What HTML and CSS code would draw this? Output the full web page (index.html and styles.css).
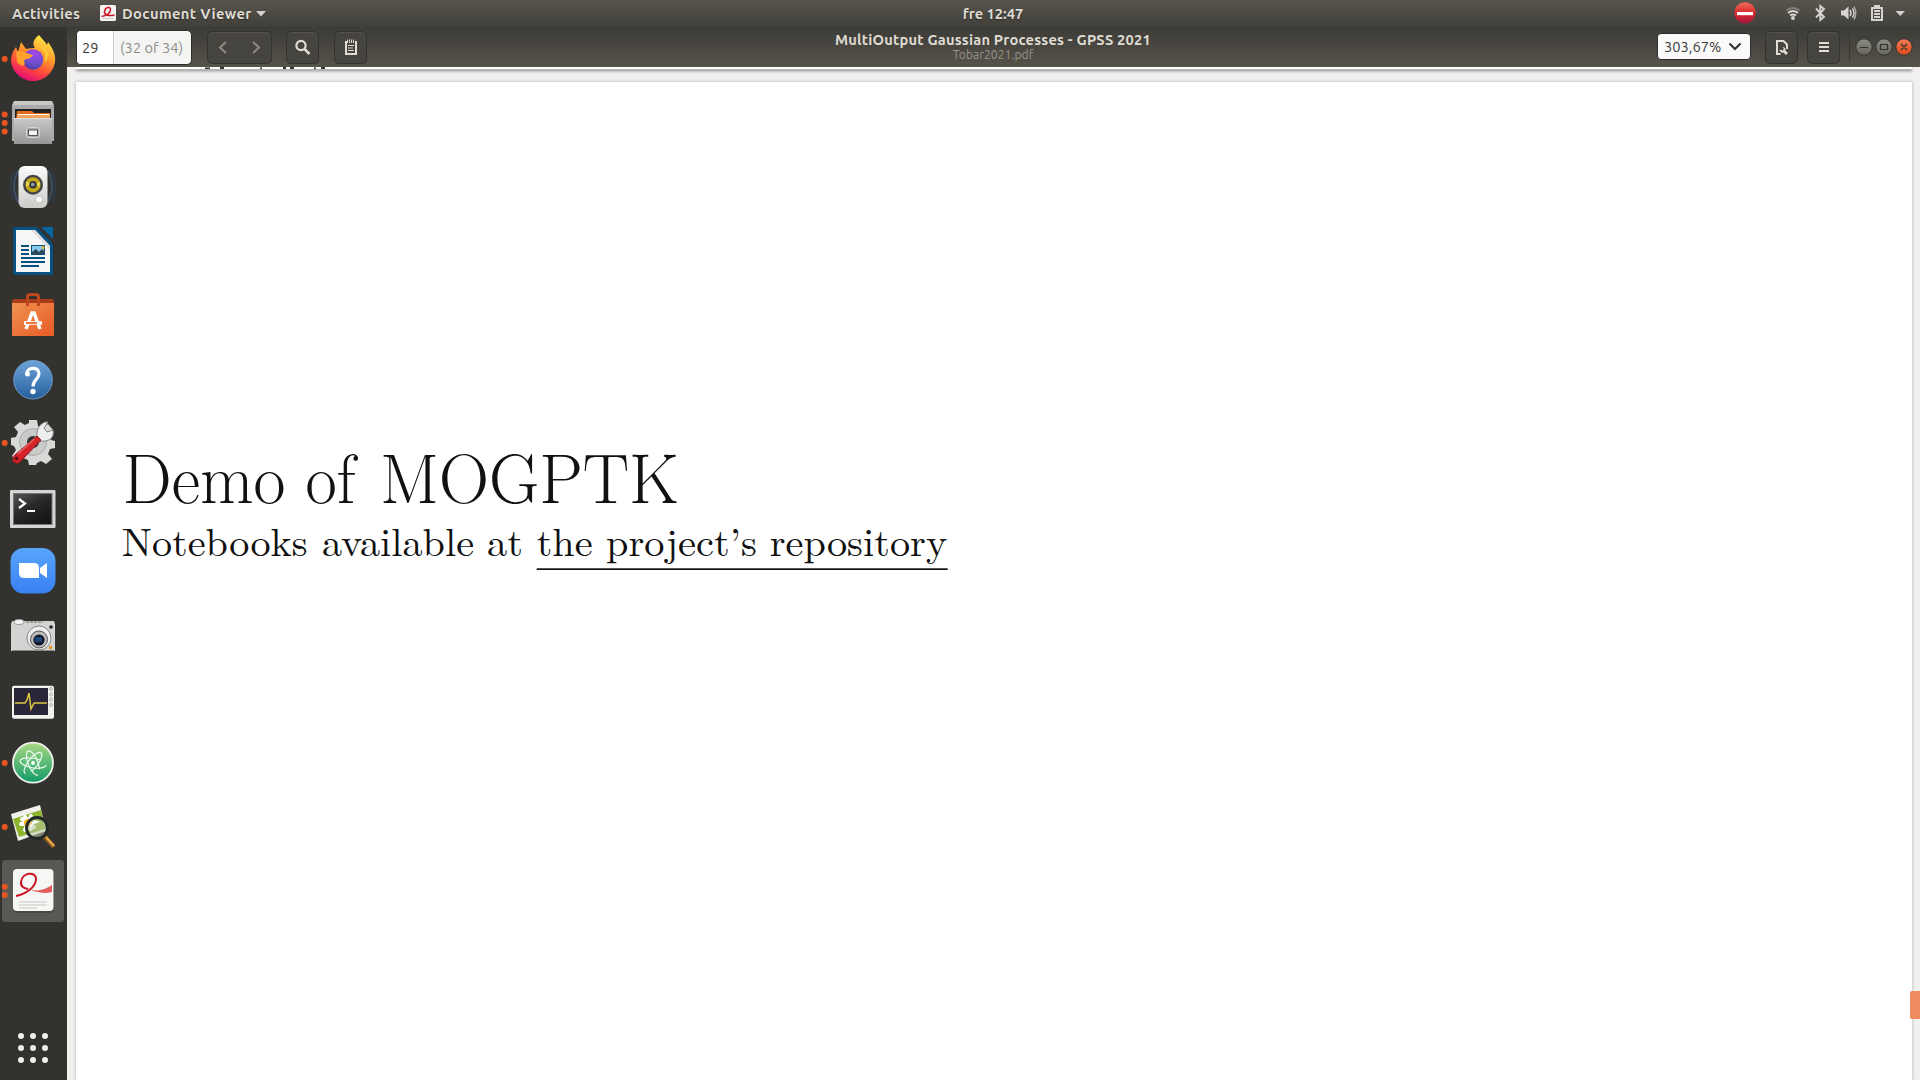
FILE: index.html
```html
<!DOCTYPE html>
<html lang="en">
<head>
<meta charset="utf-8">
<title>MultiOutput Gaussian Processes - GPSS 2021</title>
<link rel="stylesheet" href="styles.css">
</head>
<body>
<header class="panel">
  <div class="panel-left">
    <span class="activities">Activities</span>
    <svg class="app-icon" width="16" height="16" viewBox="0 0 16 16"><rect width="16" height="16" rx="1.5" fill="#f4f3f3"/><path d="M1.500 11.500C7 11 11 7 10.500 4 10 1.500 5.500 2 4.500 6 4 10 8 11.500 14.500 10" fill="none" stroke="#cc1625" stroke-width="1.500"/><path d="M2.500 13.500h11" stroke="#ccc"/></svg>
    <span class="app-name">Document Viewer</span>
    <svg class="caret" width="10" height="6"><path d="M0 0h10L5 5.500z" fill="#d5d3cf"/></svg>
  </div>
  <span class="clock">fre 12:47</span>
  <div class="panel-right">
    <svg width="190" height="27" viewBox="1730 0 190 27">
      <defs><linearGradient id="stop" x2="0" y2="1"><stop stop-color="#ef6b58"/><stop offset=".5" stop-color="#d92b2b"/><stop offset="1" stop-color="#a91540"/></linearGradient></defs>
      <circle cx="1745" cy="12.800" r="10.600" fill="url(#stop)"/><rect x="1737" y="12" width="16" height="3.200" fill="#fff"/>
      <g fill="none" stroke="#d5d3cf" stroke-width="1.800">
        <path d="M1786.500 10.500q6.500-5 13 0" stroke="#85827b"/><path d="M1788 13q5-4 10 0"/><path d="M1790 15.500q3-2 6 0"/>
        <path d="M1816 8.500l8 8.500-3.700 3V6l3.700 3-8 8.500" stroke-width="1.900"/>
        <path d="M1850 10q2 3 0 6M1852.500 8.500q3 4.500 0 9" stroke-width="1.500"/><path d="M1854 6.500q3.500 6.500 0 13" stroke="#aaa8a3" stroke-width="1.500"/>
        <path d="M1872 8h10v12h-10z" stroke-width="2"/><path d="M1874 11h6M1874 14h6M1874 17h6" stroke-width="1.800"/>
      </g>
      <g fill="#d5d3cf"><circle cx="1793" cy="18" r="2"/><path d="M1841 10.500h3l4.500-4v13l-4.500-4h-3z"/><path d="M1874 5h6v3h-6zM1895.500 11h9.500l-4.700 5z"/></g>
    </svg>
  </div>
</header>
<div class="workspace">
  <nav class="dock">
    <svg width="67" height="64" viewBox="0 0 67 64">
      <defs>
        <linearGradient id="fox" x1=".75" y1="0" x2=".3" y2="1"><stop stop-color="#fff14a"/><stop offset=".4" stop-color="#ff9a2a"/><stop offset=".72" stop-color="#ff453f"/><stop offset="1" stop-color="#df067d"/></linearGradient>
        <radialGradient id="globe" cx=".6" cy=".2" r=".9"><stop stop-color="#a447ec"/><stop offset=".6" stop-color="#6b4fcb"/><stop offset="1" stop-color="#42369c"/></radialGradient>
      </defs>
      <circle class="dot" cx="4.700" cy="32" r="3"/>
      <path d="M39 8c2 3 6 6 8 10l1-3c5 7 8 13 7 20-2 12-12 19-22 19S12 46 11 34c0-6 2-10 5-14l2 5 3-10 5 7c4-1 7-1 9-1-4-5 0-10 4-13z" fill="url(#fox)"/>
      <circle cx="33" cy="32.500" r="10.200" fill="url(#globe)"/>
      <path d="M16 25c6-3 9 1 17 3-2 4-7 4-9 5 2 6-1 8-7 2z" fill="#ffa22e"/><path d="M33 21c10-3 15 5 11 15 8-7 4-20-11-15z" fill="#ffcc38"/>
    </svg>
    <svg width="67" height="64" viewBox="0 0 67 64">
      <defs><linearGradient id="metal" x2="0" y2="1"><stop stop-color="#c9c9c9"/><stop offset="1" stop-color="#979797"/></linearGradient></defs>
      <circle class="dot" cx="4.700" cy="23.500" r="3"/><circle class="dot" cx="4.700" cy="32" r="3"/><circle class="dot" cx="4.700" cy="40.500" r="3"/>
      <path d="M14 10h38l2 4v36H12V14z" fill="#aaa"/><path d="M14 10h38l1 4H13z" fill="#c7c7c7"/><rect x="15" y="18" width="36" height="10" fill="#222"/><path d="M17 20h15l2 2h16v6H16z" fill="#df6a1c"/><path d="M17 23h33v5H17z" fill="#f4a35b"/><path d="M18 23.500h31" stroke="#fff"/>
      <path d="M14 27h38v26H14z" fill="url(#metal)"/><path d="M14 27.500h38" stroke="#ddd"/><rect x="26.500" y="36.500" width="13" height="10" rx="2" fill="#aaa" stroke="#d5d5d5"/><rect x="28.500" y="39" width="9" height="5.500" fill="#f4f4f4" stroke="#555"/>
    </svg>
    <svg width="67" height="64" viewBox="0 0 67 64">
      <defs><linearGradient id="box" x2="0" y2="1"><stop stop-color="#fbfbfb"/><stop offset="1" stop-color="#ccccc9"/></linearGradient></defs>
      <g fill="none" stroke="#2f3b49" stroke-width="2"><path d="M14 16q-7 15 0 31M52 16q7 15 0 31"/><path d="M18 16q-8 15 0 31M48 16q8 15 0 31" stroke="#3a4e66"/></g>
      <rect x="18.500" y="11" width="29" height="42" rx="6" fill="url(#box)"/><circle cx="33" cy="29.700" r="10" fill="#454545"/><circle cx="33" cy="29.700" r="7.500" fill="#c6a916"/><path d="M33 29.700l-7 1.500v-5zm0 0l7 2v-5z" fill="#e9d34e"/><circle cx="33" cy="29.700" r="3.800" fill="#34383d"/><circle cx="32.700" cy="29.500" r="1.800" fill="#97a0a8"/><circle cx="39" cy="44.500" r="3.700" fill="#f8f8f8" stroke="#bbb"/><circle cx="26" cy="46" r="2" fill="none" stroke="#ccc"/>
    </svg>
    <svg width="67" height="64" viewBox="0 0 67 64">
      <path d="M15 8h22l16 17v31H15q-2 0-2-2V10q0-2 2-2z" fill="#07507f"/><path d="M41 8h12v12z" fill="#07659e"/><path d="M16 11h19l15 16v26H16z" fill="#f6f6f6"/><path d="M35 11l15 16v4L31 11z" fill="#ddd"/><path d="M21 27h8M21 31h8M21 35h8M21 39h24M21 43h24M21 47h18" stroke="#07507f" stroke-width="2"/><rect x="31.500" y="26.500" width="13" height="9" fill="#86c8ec" stroke="#07507f"/><path d="M32 35v-2l4-3 3 3 3-3 3 3v2z" fill="#2f4858"/><circle cx="43" cy="28.500" r="1.500" fill="#eeb32c"/>
    </svg>
    <svg width="67" height="64" viewBox="0 0 67 64">
      <defs><linearGradient id="bag" x2="1" y2="1"><stop stop-color="#ef9250"/><stop offset="1" stop-color="#e85a27"/></linearGradient></defs>
      <path d="M13 16h40l1 4H12z" fill="#a93d18"/><path d="M12 20h42v33H12z" fill="url(#bag)"/><path d="M27.500 23v-9q0-2.500 3-2.500h5q3 0 3 2.500v9" fill="none" stroke="#bd461c" stroke-width="3"/><path d="M26 46l6-16h2l6 16M24 40h18" fill="none" stroke="#fff" stroke-width="3.500"/><path d="M26 40h11" stroke="#e66b31" stroke-width="1.800"/>
    </svg>
    <svg width="67" height="64" viewBox="0 0 67 64">
      <defs><linearGradient id="help" x2="0" y2="1"><stop stop-color="#6ca5d8"/><stop offset="1" stop-color="#275f9d"/></linearGradient></defs>
      <circle cx="33" cy="32.700" r="19.300" fill="url(#help)" stroke="#699ac6"/><path d="M27 27c-1-7 12-8 12-.5 0 6-6 6-6 13" fill="none" stroke="#fff" stroke-width="3.200"/><circle cx="27.500" cy="27" r="2.500" fill="#fff"/><circle cx="33" cy="44.500" r="2.700" fill="#fff"/>
    </svg>
    <svg width="67" height="64" viewBox="0 0 67 64">
      <circle class="dot" cx="4.700" cy="32" r="3"/>
      <path d="M29 9h8l1 6 4 2 6-4 5 6-4 5 2 5 4 1v7l-5 1-2 5 4 5-6 5-5-3-4 2-1 2h-7l-1-5-5-2-6 3-5-5 4-6-2-4-3-1v-7l5-1 2-5-4-5 6-5 5 3 4-2z" fill="#d9d9d8"/><circle cx="33" cy="31" r="13.500" fill="#cacac9" stroke="#aaa"/><circle cx="33" cy="31" r="6" fill="#343432"/>
      <path d="M37 25c-1-8 5-15 11-14l-4 6 3 4 6-2c2 8-5 12-11 11l-3 1-5-4z" fill="#eee" stroke="#858585"/><path d="M37 25l4 4-21 22q-4 3-7-1-1-3 2-6z" fill="#d42329" stroke="#8f171b"/><path d="M18 43l16-15" stroke="#ef6262" stroke-width="1.500"/><circle cx="16.500" cy="47.500" r="1.800" fill="#590d11"/>
    </svg>
    <svg width="67" height="64" viewBox="0 0 67 64">
      <defs><linearGradient id="term" x2=".7" y2="1"><stop stop-color="#555"/><stop offset=".5" stop-color="#282828"/><stop offset="1" stop-color="#161616"/></linearGradient></defs>
      <rect x="10" y="15" width="45.500" height="38" rx="1" fill="#d5d5d4"/><rect x="13.500" y="18.500" width="38.500" height="31" fill="url(#term)" stroke="#777"/><path d="M19 24l6 4.500-6 4.500M27 36h8" fill="none" stroke="#fff" stroke-width="2.200"/>
    </svg>
    <svg width="67" height="64" viewBox="0 0 67 64">
      <defs><linearGradient id="zoom" x2="0" y2="1"><stop stop-color="#58a5fb"/><stop offset="1" stop-color="#3980f1"/></linearGradient></defs>
      <rect x="10.500" y="9" width="45" height="45.500" rx="13" fill="url(#zoom)"/><path d="M19 24h15q5 0 5 5v10H24q-5 0-5-5zM40 29l7-5v15l-7-5z" fill="#fff"/>
    </svg>
    <svg width="67" height="64" viewBox="0 0 67 64">
      <path d="M12 18h42l1 3v27H11V21z" fill="#d3d3d1"/><path d="M12 47.500h42" stroke="#888"/><ellipse cx="19" cy="19" rx="5" ry="2.500" fill="#f5f5f5" stroke="#999"/><path d="M26 19h17" stroke="#666" stroke-dasharray="3 1"/><circle cx="39" cy="35" r="12" fill="#eee" stroke="#888"/><circle cx="39" cy="36.500" r="8.500" fill="#bbb" stroke="#555"/><circle cx="39" cy="37" r="5.600" fill="#101725"/><rect x="35" y="34" width="7" height="5" fill="#1a4579"/><circle cx="51" cy="24" r="1.800" fill="#222"/><rect x="49" y="43" width="3" height="3" fill="#e99520"/>
    </svg>
    <svg width="67" height="64" viewBox="0 0 67 64">
      <rect x="12" y="18.700" width="42" height="33" rx="2" fill="#f1f1ed"/><rect x="14" y="21" width="34" height="27" fill="#2a2637"/><path d="M15 36h10l2-3 2-7 2 16 3-6h13" fill="none" stroke="#dac645" stroke-width="1.500"/><g fill="#e8e8e6" stroke="#999" stroke-width=".7"><circle cx="51" cy="22" r="1.500"/><circle cx="51" cy="27.500" r="1.500"/><circle cx="51" cy="32.500" r="1.500"/><circle cx="51" cy="38" r="1.500"/></g>
    </svg>
    <svg width="67" height="64" viewBox="0 0 67 64">
      <defs><linearGradient id="atom" x2="0" y2="1"><stop stop-color="#a9d984"/><stop offset="1" stop-color="#119b68"/></linearGradient></defs>
      <circle class="dot" cx="4.700" cy="32" r="3"/><circle cx="33" cy="31.700" r="20" fill="url(#atom)" stroke="#f1f1ee" stroke-width="1.800"/><g fill="none" stroke="#effaf2" stroke-width="1.200"><ellipse cx="33" cy="32" rx="13" ry="4.800" transform="rotate(10 33 32)" stroke-dasharray="50 8"/><ellipse cx="33" cy="32" rx="13" ry="4.800" transform="rotate(68 33 32)" stroke-dasharray="52 6"/><ellipse cx="33" cy="32" rx="13" ry="4.800" transform="rotate(128 33 32)" stroke-dasharray="51 7"/></g><circle cx="33" cy="32" r="1.900" fill="#fff"/>
    </svg>
    <svg width="67" height="64" viewBox="0 0 67 64">
      <circle class="dot" cx="4.700" cy="32" r="3"/>
      <path d="M11 19l29-9 6 26-28 10z" fill="#f1f1ec"/><path d="M13 24l28-9 4 19-26 8z" fill="#8bb52c"/><g stroke="#fff" stroke-width="4" stroke-linecap="round"><path d="M21 29l14-2M25 22l6 12M31 21l-6 14M22 24l12 8"/></g><circle cx="28" cy="28" r="4" fill="#efb21d"/><path d="M44 41l10 11" stroke="#8a5720" stroke-width="4.500"/><path d="M46 42l8 9" stroke="#e9aa4c" stroke-width="2.300"/><circle cx="37" cy="33" r="10.500" fill="#bbc5a4" fill-opacity=".55" stroke="#202927" stroke-width="2.800"/><path d="M30 32q3-6 9-5" fill="none" stroke="#fff" stroke-width="1.500"/>
    </svg>
    <svg class="active" width="67" height="64" viewBox="0 0 67 64">
      <rect x="2" y="1" width="62" height="62" rx="3.500" fill="#595855"/><circle class="dot" cx="4.700" cy="27.700" r="3"/><circle class="dot" cx="4.700" cy="36" r="3"/>
      <rect x="13" y="11" width="41" height="43" rx="4" fill="#343331" opacity=".45"/><rect x="13" y="10" width="40.500" height="42" rx="4" fill="#f6f6f5"/><path d="M27 29q12 6 25-3v7q-12 3-25-4z" fill="#e45e60"/><path d="M16 37C26 35 36 28 36 20c0-8-14-7-15 3-.5 5 3 6 7 7" fill="none" stroke="#ca1522" stroke-width="2"/><path d="M19 43h28M19 46h28M19 49h18" stroke="#c5c5c3" stroke-width="1.200"/>
    </svg>
    <svg class="launcher" width="67" height="64" viewBox="0 0 67 64"><g fill="#eee"><circle cx="21" cy="20" r="3"/><circle cx="33" cy="20" r="3"/><circle cx="45" cy="20" r="3"/><circle cx="21" cy="32" r="3"/><circle cx="33" cy="32" r="3"/><circle cx="45" cy="32" r="3"/><circle cx="21" cy="44" r="3"/><circle cx="33" cy="44" r="3"/><circle cx="45" cy="44" r="3"/></g></svg>
  </nav>
  <main class="window">
    <div class="toolbar">
      <div class="tools-left">
        <div class="page-entry"><span class="page-number">29</span><span class="page-count">(32 of 34)</span></div>
        <div class="button nav"><svg width="64" height="32"><path d="M18 10l-6 5.500 6 5.500M45 10l6 5.500-6 5.500" fill="none" stroke="#8e8b83" stroke-width="2"/></svg></div>
        <div class="button search"><svg width="32" height="32"><circle cx="14" cy="13.500" r="4.600" fill="none" stroke="#e0dcd3" stroke-width="2.200"/><path d="M17.500 17l5 5" stroke="#e0dcd3" stroke-width="2.600"/></svg></div>
        <div class="button notes"><svg width="32" height="32"><path d="M11 9v13h10V9" fill="none" stroke="#e0dcd3" stroke-width="2"/><path d="M12.500 7.500v3.500M14.500 7.500v3.500M16.500 7.500v3.500M18.500 7.500v3.500" stroke="#e0dcd3"/><path d="M13 13.500h6M13 16h5M13 18.500h6" stroke="#e0dcd3" stroke-width="1.200"/></svg></div>
      </div>
      <div class="titles"><span class="doc-title">MultiOutput Gaussian Processes - GPSS 2021</span><span class="file-name">Tobar2021.pdf</span></div>
      <div class="tools-right">
        <div class="zoom-box"><span>303,67%</span><svg width="14" height="9"><path d="M1.500 1.500L7 7l5.500-5.500" fill="none" stroke="#333" stroke-width="2.200"/></svg></div>
        <div class="button"><svg width="32" height="32"><path d="M14.500 22H11V9h6.500l3.500 3.500V17" fill="none" stroke="#e0dcd3" stroke-width="2"/><path d="M13.500 17.500c0 2.500 2 3.500 4 3l2.500 2.500 2-2-2.500-2.500c.5-2-1-3.500-3-3.500l1.500 2-1.500 1.500z" fill="#e0dcd3"/></svg></div>
        <div class="button menu"><svg width="32" height="32"><path d="M11 11h10M11 15h10M11 19h10" stroke="#e0dcd3" stroke-width="2"/></svg></div>
        <svg class="controls" width="71" height="32" viewBox="0 0 71 32"><defs><linearGradient id="ctl" x2="0" y2="1"><stop stop-color="#8c8b84"/><stop offset="1" stop-color="#66655e"/></linearGradient><linearGradient id="cls" x2="0" y2="1"><stop stop-color="#f47c55"/><stop offset="1" stop-color="#dc4818"/></linearGradient></defs><path d="M.5 2v28" stroke="#37362f"/><g stroke="#34332e"><circle cx="15" cy="16" r="8.200" fill="url(#ctl)"/><circle cx="35" cy="16" r="8.200" fill="url(#ctl)"/><circle cx="55" cy="16" r="8.200" fill="url(#cls)"/><path d="M11 16.500h8M31.500 13.500h7v5h-7zM52 13l6 6M58 13l-6 6" fill="none" stroke-width="1.200"/></g></svg>
      </div>
    </div>
    <div class="document">
      <div class="previous-page"><svg width="1836" height="2" viewBox="0 0 1836 2"><path d="M129 1.500h5M144 1h4M184 1.500h2M207 1h3M214 1h4M238 1.500h2M245 1h4" stroke="#333" stroke-width="2"/></svg></div>
      <article class="page">
        <svg class="slide" width="1000" height="300" viewBox="100 382 1000 300">
          <g class="slide-title">
            <text x="122.500" y="502.700" textLength="163" lengthAdjust="spacingAndGlyphs">Demo</text>
            <text x="305.500" y="502.700" textLength="50" lengthAdjust="spacingAndGlyphs">of</text>
            <text x="380" y="502.700" textLength="299" lengthAdjust="spacingAndGlyphs">MOGPTK</text>
          </g>
          <g class="slide-line">
            <text x="121.700" y="556" textLength="186" lengthAdjust="spacingAndGlyphs">Notebooks</text>
            <text x="322" y="556" textLength="152" lengthAdjust="spacingAndGlyphs">available</text>
            <text x="487" y="556" textLength="36" lengthAdjust="spacingAndGlyphs">at</text>
            <text x="536.700" y="556" textLength="56" lengthAdjust="spacingAndGlyphs">the</text>
            <text x="606" y="556" textLength="151" lengthAdjust="spacingAndGlyphs">project’s</text>
            <text x="769.700" y="556" textLength="177.500" lengthAdjust="spacingAndGlyphs">repository</text>
          </g>
          <rect x="536.700" y="568.300" width="411" height="1.700"/>
        </svg>
      </article>
      <div class="scroll-thumb"></div>
    </div>
  </main>
</div>
</body>
</html>
```
FILE: styles.css
```css
* { box-sizing: border-box; }
body { margin: 0; width: 1920px; height: 1080px; overflow: hidden; display: flex; flex-direction: column; font-family: Ubuntu, "Noto Sans", sans-serif; background: #f1f0ee; }
svg { display: block; flex: none; }
span { white-space: nowrap; }
.panel { height: 27px; flex: none; display: grid; grid-template-columns: 835px 316px 1fr; align-items: center; background: linear-gradient(#58554d, #403f3a); color: #dfdbd2; font-size: 14.67px; font-weight: 600; line-height: 20px; text-shadow: 0 1px 1px #2b2a27; }
.panel-left { display: flex; align-items: center; padding-left: 12px; }
.activities { width: 88px; letter-spacing: .3px; }
.app-name { width: 134px; margin-left: 6px; letter-spacing: .4px; }
.app-icon { margin-top: -2px; }
.clock { text-align: center; }
.panel-right { display: flex; justify-content: flex-end; }
.workspace { flex: 1; min-height: 0; display: flex; }
.dock { width: 67px; flex: none; display: flex; flex-direction: column; background: #33322e; }
.dot { fill: #e95420; }
.launcher { margin-top: 93px; }
.window { flex: 1; min-width: 0; display: flex; flex-direction: column; }
.toolbar { height: 40px; flex: none; display: grid; grid-template-columns: 768px 316px 1fr; background: linear-gradient(#3c3b37, #57534a); }
.tools-left { display: flex; align-items: center; padding-left: 9px; }
.page-entry { display: flex; width: 116px; height: 35px; border: 1px solid #2f2e2a; border-radius: 5px; overflow: hidden; font-size: 14.67px; line-height: 33px; background: #f4f4f3; }
.page-number { width: 37px; padding-left: 5px; color: #3c3c3c; background: #fff; border-right: 1px solid #c9c8c5; }
.page-count { padding-left: 6px; color: #8d8d8b; }
.button { width: 33px; height: 33px; border: 1px solid #33322e; border-radius: 5px; background: #46443e; box-shadow: inset 0 1px #535149; }
.nav { width: 65px; margin-left: 15px; }
.search { margin-left: 14px; }
.notes { margin-left: 15px; }
.titles { display: flex; flex-direction: column; align-items: center; }
.doc-title { margin-top: 3px; height: 17px; font-size: 14.67px; line-height: 19px; font-weight: 600; letter-spacing: .2px; color: #dfdbd2; }
.file-name { font-size: 12.2px; line-height: 16px; color: #98948b; }
.tools-right { display: flex; align-items: center; justify-content: flex-end; }
.zoom-box { display: flex; align-items: center; gap: 7px; width: 94px; height: 27px; margin: 0 14px 1px 0; padding-left: 6px; border: 1px solid #2f2e2a; border-radius: 4px; background: #fafafa; color: #3c3c3c; font-size: 14.67px; }
.menu { margin-left: 9px; margin-right: 9px; }
.document { flex: 1; min-height: 0; position: relative; padding-left: 9px; background: #f1f0ee; }
.previous-page { width: 1836px; height: 2px; margin-bottom: 13px; background: #fff; box-shadow: 0 2px 3px #777; }
.page { width: 1836px; height: 998px; padding: 300px 0 0 24px; background: #fff; box-shadow: 0 0 3px #aaa; }
.slide { font-family: "Latin Modern Roman", "CMU Serif", "Liberation Serif", serif; fill: #111; }
.slide-title { font-family: "LM Roman 17", "Latin Modern Roman 17", "Latin Modern Roman", "CMU Serif", "Liberation Serif", serif; font-size: 70px; }
.slide-line { font-size: 40px; }
.scroll-thumb { position: absolute; right: 0; top: 924px; width: 10px; height: 28px; background: #f28a60; border-radius: 2px 0 0 2px; }
```
